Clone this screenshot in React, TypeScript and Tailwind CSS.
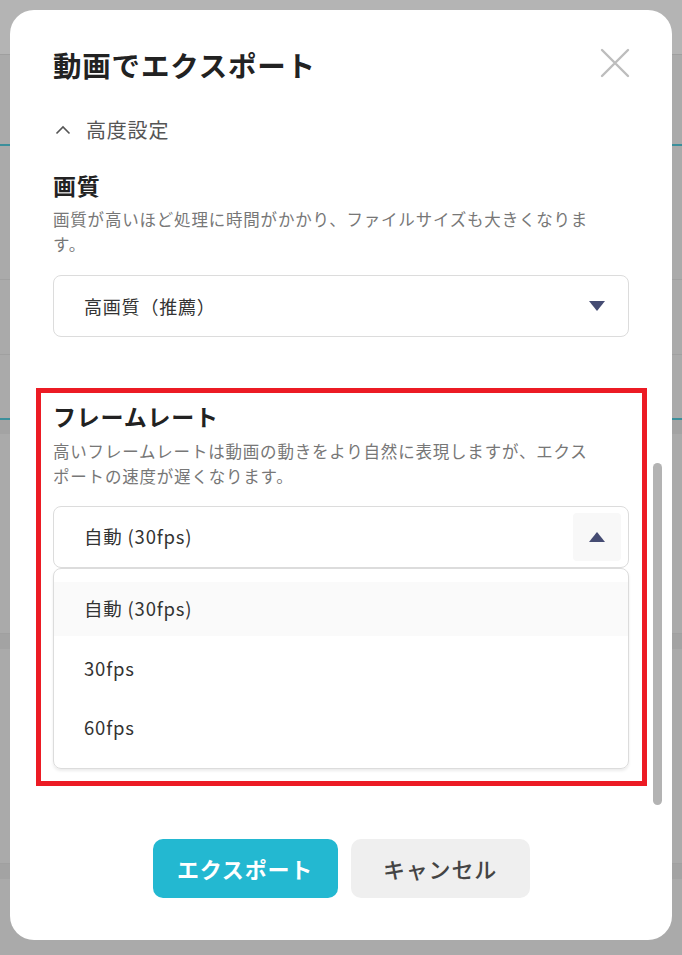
import React from "react";

const font = { fontFamily: '"Noto Sans CJK JP", "Noto Sans", sans-serif' };

function CloseIcon() {
  return (
    <svg width="30" height="30" viewBox="0 0 30 30" fill="none">
      <path d="M2 2L28 28M28 2L2 28" stroke="#bdbdbd" strokeWidth="2.4" strokeLinecap="round" />
    </svg>
  );
}

function Triangle({ up = false }: { up?: boolean }) {
  return (
    <svg width="16" height="10" viewBox="0 0 16 10">
      {up ? <path d="M8 0L16 10H0Z" fill="#454c73" /> : <path d="M0 0H16L8 10Z" fill="#454c73" />}
    </svg>
  );
}

// page behind the dialog, dimmed by the overlay
function Backdrop() {
  return (
    <div className="flex h-[955px] flex-col bg-[#aaaaaa]">
      <div className="h-[55px] shrink-0 border-b border-[#9f9f9f] bg-[#b4b4b4]" />
      <div className="h-[91px] shrink-0 border-b-2 border-[#3b8f9b]" />
      <div className="h-[134px] shrink-0 border-b border-[#a0a0a0]" />
      <div className="h-[75px] shrink-0 border-b border-[#a0a0a0]" />
      <div className="h-[65px] shrink-0 border-b-2 border-[#3b8f9b]" />
      <div className="h-[14px] shrink-0 bg-[#a3a3a3]" />
      <div className="h-[200px] shrink-0 border-b border-[#a0a0a0]" />
      <div className="h-[15px] shrink-0 bg-[#a3a3a3]" />
      <div className="h-[215px] shrink-0 border-b border-[#a0a0a0]" />
      <div className="h-[15px] shrink-0 bg-[#a3a3a3]" />
    </div>
  );
}

export default function App() {
  return (
    <div className="relative h-[955px] w-[682px] overflow-hidden tracking-[0.05em]" style={font}>
      <Backdrop />

      <div className="absolute left-[10px] top-[10px] flex h-[930px] w-[662px] flex-col rounded-[24px] bg-white px-[43px] pt-[35px]">
        <div className="flex items-center justify-between">
          <h2 className="text-[28.5px] leading-[40px] font-bold text-[#222]">動画でエクスポート</h2>
          <button className="-mr-[1px] mt-[-4px]">
            <CloseIcon />
          </button>
        </div>

        <div className="mt-[31px] flex items-center gap-[15px] text-[20px] leading-[28px] text-[#555]">
          <svg width="16" height="10" viewBox="0 0 16 10" fill="none" className="ml-[2px]">
            <path d="M1.5 8.5L8 2L14.5 8.5" stroke="#555" strokeWidth="1.6" />
          </svg>
          <span>高度設定</span>
        </div>

        <h3 className="mt-[25px] text-[23px] leading-[32px] font-bold text-[#222]">画質</h3>
        <p className="mt-[6px] w-[545px] text-[16.5px] leading-[25px] text-[#777]">
          画質が高いほど処理に時間がかかり、ファイルサイズも大きくなります。
        </p>
        <div className="mt-[18px] flex h-[62px] items-center justify-between rounded-[8px] border border-[#dcdcdc] pl-[30px] pr-[23px] text-[18px] text-[#333]">
          <span>高画質（推薦）</span>
          <Triangle />
        </div>

        <section className="relative mt-[63px]">
          <div className="pointer-events-none absolute -bottom-[17px] -left-[17px] -right-[18px] -top-[12px] border-[5px] border-[#ec1b24]" />
          <h3 className="text-[23px] leading-[32px] font-bold text-[#222]">フレームレート</h3>
          <p className="mt-[7px] w-[545px] text-[16.5px] leading-[25px] text-[#777]">
            高いフレームレートは動画の動きをより自然に表現しますが、エクスポートの速度が遅くなります。
          </p>
          <div className="mt-[17px] flex h-[62px] items-center justify-between rounded-[8px] border border-[#dcdcdc] pl-[30px] pr-[7px] text-[18.5px] text-[#333]">
            <span>自動 (30fps)</span>
            <span className="flex h-[48px] w-[48px] items-center justify-center rounded-[4px] bg-[#f8f8f8]">
              <Triangle up />
            </span>
          </div>
          <ul className="flex h-[201px] flex-col gap-[6px] rounded-[8px] border border-[#dcdcdc] py-[13px] text-[18.5px] text-[#333] shadow-[0_2px_3px_rgba(0,0,0,0.08)]">
            <li className="flex h-[54px] items-center bg-[#fafafa] pl-[30px]">自動 (30fps)</li>
            <li className="flex h-[54px] items-center pl-[30px]">30fps</li>
            <li className="flex h-[54px] items-center pl-[30px]">60fps</li>
          </ul>
        </section>

        <div className="mt-[70px] flex justify-center gap-[13px]">
          <button className="h-[59px] w-[185px] rounded-[10px] bg-[#23b8d1] text-[22px] font-bold text-white">
            エクスポート
          </button>
          <button className="h-[59px] w-[179px] rounded-[10px] bg-[#efefef] text-[22px] font-medium text-[#444]">
            キャンセル
          </button>
        </div>

        {/* scroll thumb of the dialog body */}
        <div className="absolute right-[10px] top-[453px] h-[342px] w-[9px] rounded-full bg-[#b3b3b3]" />
      </div>
    </div>
  );
}
